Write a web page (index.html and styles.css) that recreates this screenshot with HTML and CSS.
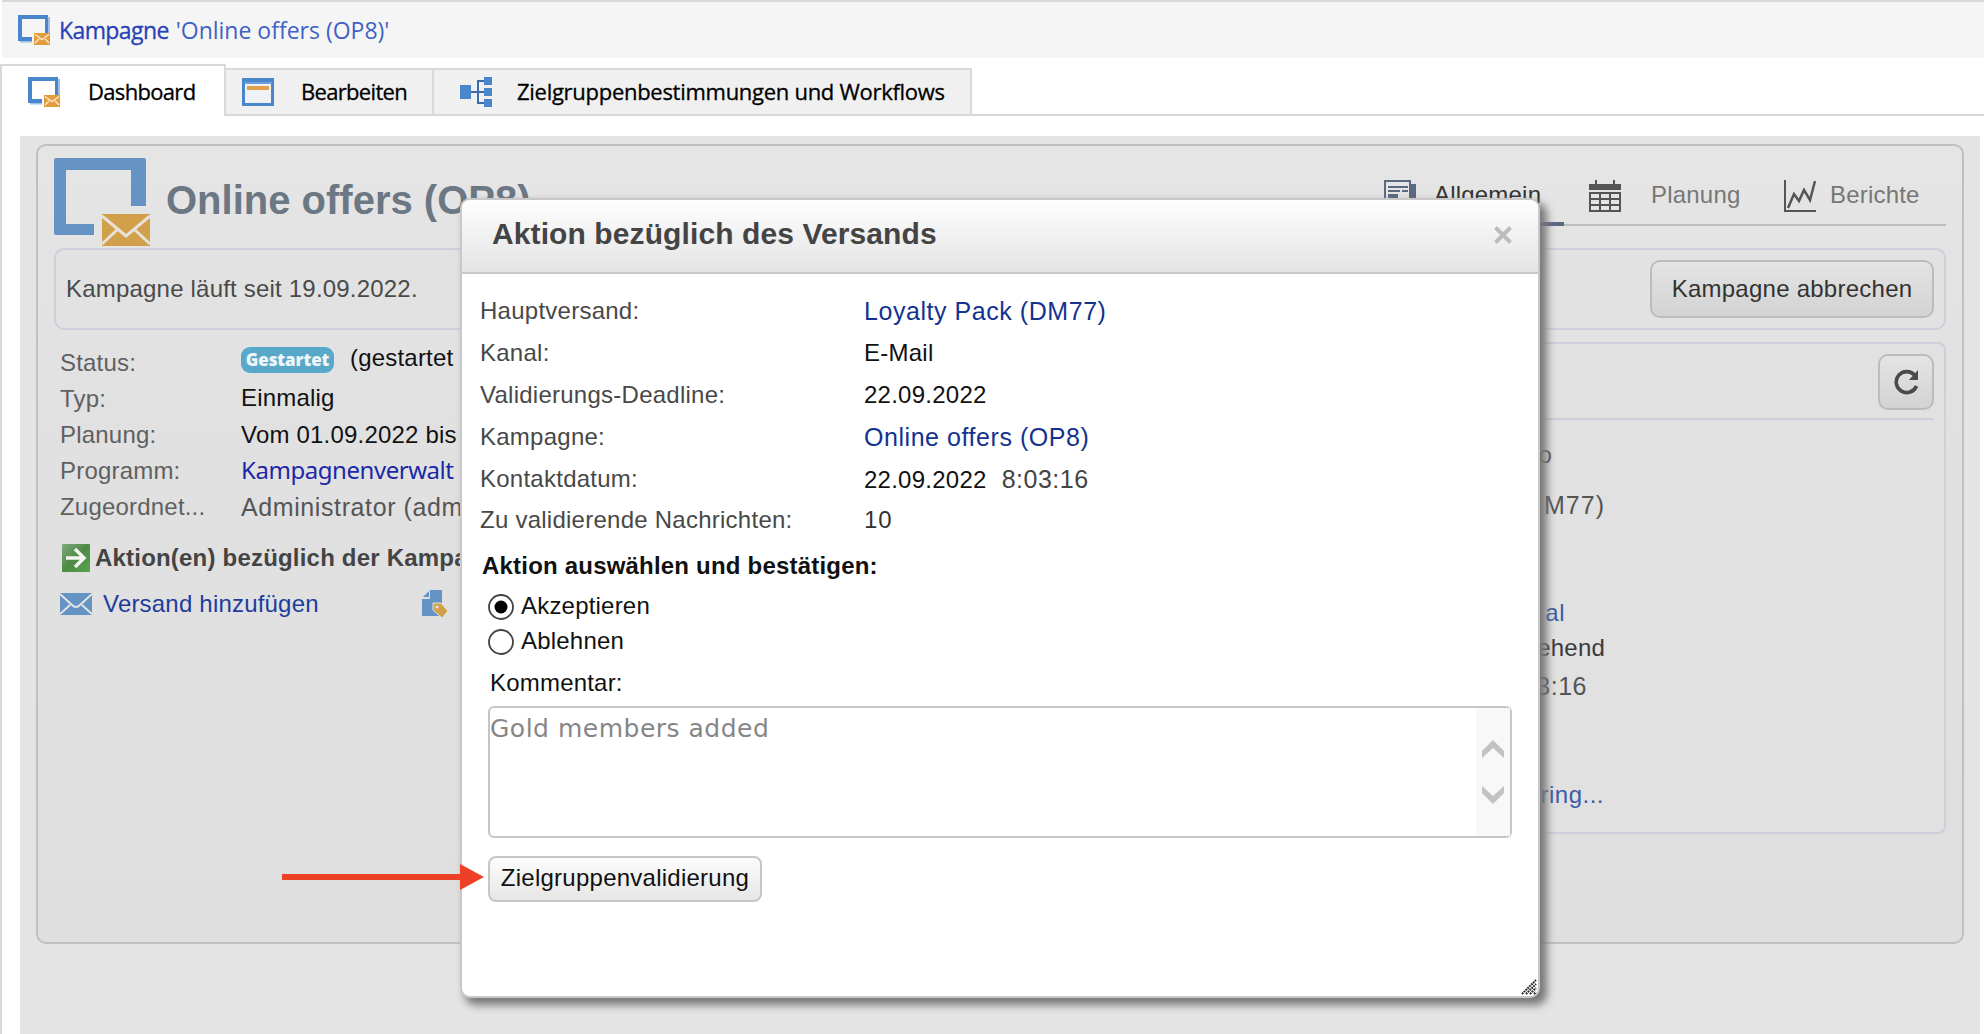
FILE: index.html
```html
<!DOCTYPE html>
<html lang="de">
<head>
<meta charset="utf-8">
<title>Kampagne 'Online offers (OP8)'</title>
<link rel="stylesheet" href="styles.css">
</head>
<body>
<svg class="defs" aria-hidden="true">
  <symbol id="campaign" viewBox="0 0 32 30">
    <path fill="#4a86cc" d="M0 0h30v18h-3V4H4v18h10v4H0z"/>
    <path fill="#9fbfe6" d="M30 2h2v16h-2zM2 26h12v1.500H2z"/>
    <path fill="#e39c3d" d="M16 18h16v12H16z"/>
    <path fill="none" stroke="#fbe6c8" stroke-width="1.500" d="M17 19.500l7 5 7-5M17 28l4-4M31 28l-4-4"/>
  </symbol>
</svg>

<header class="titlebar">
  <svg class="icon-campaign"><use href="#campaign"/></svg>
  <span class="titlebar-text"><span class="titlebar-kind">Kampagne</span> <span class="titlebar-name">'Online offers (OP8)'</span></span>
</header>

<nav class="tabs">
  <div class="tab tab-active">
    <svg class="icon-campaign"><use href="#campaign"/></svg>
    <span class="tab-text">Dashboard</span>
  </div>
  <div class="tab tab-edit">
    <svg width="32" height="28" viewBox="0 0 32 28"><path fill="#4a86cc" d="M0 0h32v28H0z"/><path fill="#6d9fdb" d="M2 4h28v2H2z"/><path fill="#eef1f6" d="M3 6h26v19H3z"/><path fill="#e3a04a" d="M5 8h22v4H5z"/></svg>
    <span class="tab-text">Bearbeiten</span>
  </div>
  <div class="tab tab-flow">
    <svg width="32" height="30" viewBox="0 0 32 30"><path fill="none" stroke="#3b6cab" stroke-width="2" d="M11 15h13M24 4h-6v22h6"/><path fill="#4a86cc" d="M0 8h11v14H0zM24 0h8v8h-8zM24 11h8v8h-8zM24 22h8v8h-8z"/></svg>
    <span class="tab-text tab-flow-text">Zielgruppenbestimmungen und Workflows</span>
  </div>
  <div class="tabs-rest"></div>
</nav>

<main class="workspace">
  <section class="panel">
    <div class="panel-head">
      <svg class="logo" width="96" height="88" viewBox="0 0 96 88">
        <path fill="#6593c3" d="M2 0h88q2 0 2 2v46H77V12H12v54h28v11H2q-2 0-2-2V2q0-2 2-2z"/>
        <path fill="#d29f4b" d="M48 56h48v32H48z"/>
        <path fill="none" stroke="#e6e2da" stroke-width="3" d="M48 58l24 20 24-20M48 86l15-14M96 86L81 72"/>
      </svg>
      <h1 class="panel-title">Online offers (OP8)</h1>
      <nav class="views">
        <div class="view view-active">
          <svg width="32" height="32" viewBox="0 0 32 32"><path fill="none" stroke="#5b6980" stroke-width="2" d="M1 30V1h25v29"/><path fill="#5b6980" d="M27 4h5v26h-5zM4 6h20v2H4zM4 10h12v2H4zM18 10h6v2h-6zM4 14h10v8H4z"/></svg>
          <span>Allgemein</span>
        </div>
        <div class="view view-plan">
          <svg width="32" height="32" viewBox="0 0 32 32"><path fill="#555" d="M0 4h6V0h2v4h16V0h2v4h6v6H0z"/><path fill="none" stroke="#555" stroke-width="2" d="M1 13h30v18H1zM1 19h30M1 25h30M11 13v18M21 13v18"/></svg>
          <span>Planung</span>
        </div>
        <div class="view view-report">
          <svg width="32" height="32" viewBox="0 0 32 32"><path fill="none" stroke="#555" stroke-width="2" d="M1 0v31h31"/><path fill="none" stroke="#555" stroke-width="2.500" d="M4 28l6-14 5 7 5-11 6 10 5-19"/></svg>
          <span>Berichte</span>
        </div>
      </nav>
    </div>

    <div class="message">
      <span class="message-text">Kampagne läuft seit 19.09.2022.</span>
      <button class="btn btn-cancel">Kampagne abbrechen</button>
    </div>

    <div class="columns">
      <div class="details">
        <dl class="facts">
          <dt>Status:</dt><dd class="fact-status"><span class="badge">Gestartet</span><span>(gestartet</span></dd>
          <dt>Typ:</dt><dd class="fact-type">Einmalig</dd>
          <dt>Planung:</dt><dd class="fact-plan">Vom 01.09.2022 bis</dd>
          <dt>Programm:</dt><dd class="fact-program">Kampagnenverwalt</dd>
          <dt class="fact-assigned">Zugeordnet...</dt><dd class="fact-admin">Administrator (adm</dd>
        </dl>
        <div class="actions-title">
          <svg width="28" height="28" viewBox="0 0 28 28"><defs><linearGradient id="green" x2="1" y2="1"><stop offset="0" stop-color="#7fa97c"/><stop offset=".5" stop-color="#4c8b45"/><stop offset="1" stop-color="#56a549"/></linearGradient></defs><rect width="28" height="28" rx="1" fill="url(#green)"/><path fill="none" stroke="#f2f5f1" stroke-width="3.500" d="M4 14h18M13 5l9 9-9 9"/></svg>
          <span>Aktion(en) bezüglich der Kampa</span>
        </div>
        <div class="links">
          <svg width="32" height="22" viewBox="0 0 32 22"><path fill="#6593c3" d="M0 0h32v22H0z"/><path fill="none" stroke="#e4e4e4" stroke-width="2" d="M0 1l12 11q4 4 8 0L32 1M0 21l10-9M32 21l-10-9"/></svg>
          <span class="link-add">Versand hinzufügen</span>
          <svg width="26" height="28" viewBox="0 0 26 28"><path fill="#6593c3" d="M8 0h12v26H0V9h8z"/><path fill="#6593c3" d="M1 7l6-6v6z"/><path fill="#d29f4b" stroke="#e4e4e4" stroke-width="1" d="M11 13h8l7 8-6 7-9-8z"/><circle cx="15" cy="17" r="1.500" fill="#e4e4e4"/></svg>
        </div>
      </div>

      <div class="journal">
        <div class="journal-head">
          <button class="btn btn-refresh" aria-label="Aktualisieren"><svg width="26" height="26" viewBox="0 0 26 26"><path fill="none" stroke="#4a4a4a" stroke-width="3.600" d="M21.500 6A10.500 10.500 0 1 0 23.500 17"/><path fill="#4a4a4a" d="M25 1v10H16z"/></svg></button>
        </div>
        <div class="journal-body">
          <p class="entry entry-info">o</p>
          <p class="entry entry-delivery">M77)</p>
          <p class="entry entry-link">al</p>
          <p class="entry entry-state">ehend</p>
          <p class="entry entry-time">3:16</p>
          <p class="entry entry-more">ring...</p>
        </div>
      </div>
    </div>
  </section>
</main>

<div class="dialog" role="dialog">
  <div class="dialog-head">
    <h2 class="dialog-title">Aktion bezüglich des Versands</h2>
    <svg class="close" width="18" height="18" viewBox="0 0 18 18"><path stroke="#bdbdbd" stroke-width="4" d="M1.500 1.500l15 15M16.500 1.500l-15 15"/></svg>
  </div>
  <div class="dialog-body">
    <dl class="props">
      <dt>Hauptversand:</dt><dd class="link">Loyalty Pack (DM77)</dd>
      <dt>Kanal:</dt><dd>E-Mail</dd>
      <dt>Validierungs-Deadline:</dt><dd>22.09.2022</dd>
      <dt>Kampagne:</dt><dd class="link link-campaign">Online offers (OP8)</dd>
      <dt>Kontaktdatum:</dt><dd><span>22.09.2022</span><span class="time">8:03:16</span></dd>
      <dt>Zu validierende Nachrichten:</dt><dd class="count">10</dd>
    </dl>
    <div class="choose">Aktion auswählen und bestätigen:</div>
    <div class="option"><svg width="26" height="26" viewBox="0 0 26 26"><circle cx="13" cy="13" r="12" fill="#fff" stroke="#444" stroke-width="1.800"/><circle cx="13" cy="13" r="6.500"/></svg><span>Akzeptieren</span></div>
    <div class="option"><svg width="26" height="26" viewBox="0 0 26 26"><circle cx="13" cy="13" r="12" fill="#fff" stroke="#444" stroke-width="1.800"/></svg><span>Ablehnen</span></div>
    <div class="comment-label">Kommentar:</div>
    <div class="comment">
      <div class="comment-text">Gold members added</div>
      <div class="scroll">
        <svg width="24" height="19" viewBox="0 0 24 19"><path fill="#c2c2c2" d="M12 0l11 11v7L12 8 1 18v-7z"/></svg>
        <svg width="24" height="19" viewBox="0 0 24 19"><path fill="#c2c2c2" d="M12 18L1 7V0l11 10L23 0v7z"/></svg>
      </div>
    </div>
    <button class="btn btn-validate">Zielgruppenvalidierung</button>
  </div>
  <svg class="grip" width="16" height="16" viewBox="0 0 16 16"><path stroke="#222" stroke-width="2" stroke-dasharray="1.800 .8" d="M1 15L15 1M5 15L15 5M9 15l6-6M13 15l2-2"/></svg>
</div>

<svg class="pointer" width="202" height="26" viewBox="0 0 202 26"><path fill="#ec4126" d="M0 10h178V0l24 13-24 13V16H0z"/></svg>
</body>
</html>
```

FILE: styles.css
```css
* { box-sizing: border-box; }
body {
  margin: 0;
  height: 1034px;
  overflow: hidden;
  display: flex;
  flex-direction: column;
  background: #fff;
  color: #111;
  font: 24px/28px "Liberation Sans", Arial, sans-serif;
  letter-spacing: .2px;
  white-space: nowrap;
}
svg { display: block; flex: none; }
p, h1, h2, dl, dd { margin: 0; }
.defs { position: absolute; width: 0; height: 0; }
.icon-campaign { width: 32px; height: 30px; }

.titlebar {
  flex: none;
  height: 58px;
  margin-left: 2px;
  padding: 0 0 0 16px;
  display: flex;
  align-items: center;
  gap: 9px;
  background: #f5f5f5;
  border-top: 2px solid #d9d9d9;
  font-family: "Open Sans", sans-serif;
  font-size: 23px;
  letter-spacing: 0;
  color: #2742b8;
}
.titlebar-text { padding-bottom: 1px; }
.titlebar-kind { letter-spacing: -.6px; -webkit-text-stroke: .3px; }
.titlebar-name { margin-left: 1px; color: #3f62c4; }

.tabs {
  flex: none;
  height: 52px;
  margin-top: 6px;
  display: flex;
  align-items: flex-end;
  font-family: "Open Sans", sans-serif;
  font-size: 22px;
  letter-spacing: -.68px;
  color: #000;
}
.tab {
  height: 48px;
  display: flex;
  align-items: center;
  background: #f0f0f0;
  border: 2px solid #d9d9d9;
  border-left: 0;
}
.tab-text { padding-bottom: 2px; -webkit-text-stroke: .3px; }
.tab-flow-text { letter-spacing: -.28px; }
.tab-active {
  width: 226px;
  height: 52px;
  padding: 2px 0 0 26px;
  gap: 28px;
  background: #fff;
  border-left: 2px solid #d9d9d9;
  border-bottom: 0;
}
.tab-edit { width: 208px; padding-left: 16px; gap: 27px; }
.tab-flow { width: 538px; padding-left: 26px; gap: 25px; }
.tabs-rest { flex: 1; border-bottom: 2px solid #d9d9d9; }

.workspace {
  flex: 1;
  padding: 20px 4px 0 18px;
  border-left: 2px solid #d9d9d9;
  background: #e4e4e4 content-box;
}
.panel {
  height: 800px;
  margin: 8px 16px 0;
  padding: 0 16px;
  border: 2px solid #c0c0c0;
  border-radius: 10px;
  background: linear-gradient(#e5e5e5, #e1e1e1 35%, #dfdfdf);
}
.panel-head { height: 102px; display: flex; align-items: flex-start; }
.logo { margin-top: 12px; }
.panel-title {
  margin: 29px 0 0 16px;
  font-size: 40px;
  line-height: 50px;
  letter-spacing: 0;
  color: #6b7783;
}
.views {
  height: 80px;
  margin-left: auto;
  display: flex;
  color: #777;
  border-bottom: 2px solid #bdbdbd;
}
.view {
  height: 80px;
  padding-top: 34px;
  display: flex;
  align-items: flex-start;
}
.view span { padding-top: 1px; }
.view-active { width: 180px; gap: 18px; color: #333; border-bottom: 4px solid #5b6980; }
.view-plan { width: 195px; padding-left: 25px; gap: 30px; }
.view-report { width: 187px; padding-left: 25px; gap: 14px; }

.message {
  height: 82px;
  padding: 0 10px;
  display: flex;
  align-items: center;
  justify-content: space-between;
  border: 2px solid #cbd0dc;
  border-radius: 10px;
  background: #e2e2e2;
  color: #4a4a4a;
}
.btn {
  display: flex;
  align-items: center;
  justify-content: center;
  padding: 0;
  border: 2px solid #bcbcbc;
  border-radius: 10px;
  background: linear-gradient(#e4e4e4, #d3d3d3);
  color: #333;
  font: inherit;
  letter-spacing: .25px;
}
.btn-cancel { width: 284px; height: 58px; }

.columns { margin-top: 12px; display: grid; grid-template-columns: 420px 1fr; gap: 400px; }
.details { padding: 3px 0 0 6px; }
.facts { display: grid; grid-template-columns: 181px auto; grid-auto-rows: 36px; line-height: 36px; }
.facts dt { color: #606060; }
.facts .fact-status { display: flex; gap: 16px; line-height: 22px; padding-top: 2px; }
.badge {
  height: 26px;
  width: 93px;
  border-radius: 9px;
  background: #58a8c9;
  color: #eef6fa;
  font: 800 17px/25px "Open Sans", sans-serif;
  letter-spacing: -.1px;
  text-align: center;
}
.fact-type { line-height: 34px; }
.fact-program { color: #1c28a8; font-family: "Noto Sans", sans-serif; letter-spacing: -.45px; line-height: 34px; }
.fact-admin { color: #555; font-size: 25px; letter-spacing: .6px; }
.actions-title {
  margin-top: 15px;
  height: 36px;
  display: flex;
  align-items: center;
  gap: 5px;
  padding-left: 2px;
  font-weight: bold;
  color: #444;
}
.actions-title span { padding-bottom: 1px; }
.links { margin-top: 10px; height: 36px; display: flex; align-items: center; color: #1e3c9c; }
.link-add { width: 319px; margin-left: 11px; }

.journal {
  height: 492px;
  padding: 0 10px;
  border: 2px solid #cbd0dc;
  border-radius: 8px;
  background: #e1e1e1;
}
.journal-head {
  height: 76px;
  padding-top: 10px;
  display: flex;
  justify-content: flex-end;
  border-bottom: 2px solid #cbd0dc;
}
.btn-refresh { width: 56px; height: 56px; }
.entry { text-align: right; color: #555; }
.entry-info { margin-top: 21px; padding-right: 382px; }
.entry-delivery { margin-top: 22px; padding-right: 329px; font-size: 25px; letter-spacing: 1px; }
.entry-link { margin-top: 80px; padding-right: 369px; color: #3c5ca6; letter-spacing: .5px; }
.entry-state { margin-top: 7px; padding-right: 329px; color: #3a3a3a; }
.entry-time { margin-top: 10px; padding-right: 347px; font-size: 25px; letter-spacing: .5px; }
.entry-more { margin-top: 81px; padding-right: 330px; color: #3c5ca6; letter-spacing: .5px; }

.dialog {
  position: absolute;
  left: 460px;
  top: 198px;
  width: 1080px;
  height: 800px;
  border: 2px solid #c8c8c8;
  border-radius: 10px;
  background: #fff;
  box-shadow: 6px 6px 9px 1px #777;
}
.dialog-head {
  height: 74px;
  padding: 0 26px 0 30px;
  display: flex;
  align-items: center;
  justify-content: space-between;
  border-bottom: 2px solid #c8c8c8;
  border-radius: 8px 8px 0 0;
  background: linear-gradient(#fefefe, #e4e4e4);
}
.dialog-title { font-size: 30px; line-height: 34px; letter-spacing: .1px; color: #444; padding-bottom: 5px; }
.close { margin-bottom: 2px; }
.dialog-body { padding: 16px 26px 0; }
.props {
  margin-left: -8px;
  display: grid;
  grid-template-columns: 384px auto;
  grid-auto-rows: 41.9px;
  line-height: 42px;
  letter-spacing: .25px;
}
.props dt { color: #484848; }
.props .link { color: #14328f; font-size: 25px; letter-spacing: .55px; }
.time { margin-left: 15px; color: #444; font-size: 25px; letter-spacing: .5px; }
.props .count { letter-spacing: .8px; color: #333; }
.choose { margin: 11px 0 10px -6px; font-weight: bold; }
.option { height: 34px; margin-bottom: 1px; display: flex; align-items: center; gap: 7px; }
.option span { padding-bottom: 2px; }
.comment-label { margin: 10px 0 9px 2px; }
.comment {
  width: 1024px;
  height: 132px;
  display: flex;
  justify-content: space-between;
  border: 2px solid #c6c6c6;
  border-radius: 6px;
}
.comment-text { padding-top: 6px; font: 25px/30px "DejaVu Sans", sans-serif; letter-spacing: .5px; color: #868686; }
.scroll {
  width: 34px;
  display: flex;
  flex-direction: column;
  align-items: center;
  gap: 27px;
  padding-top: 32px;
  background: #f8f8f8;
}
.btn-validate {
  width: 274px;
  height: 46px;
  margin-top: 18px;
  padding-bottom: 3px;
  border-radius: 8px;
  border-color: #c6c6c6;
  background: linear-gradient(#fdfdfd, #e6e6e6);
  color: #111;
}
.grip { position: absolute; right: 1px; bottom: 1px; }
.pointer { position: absolute; left: 282px; top: 864px; }
```
